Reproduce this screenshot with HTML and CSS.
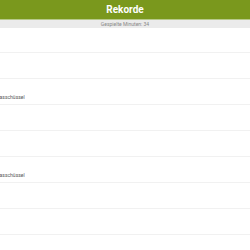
FILE: index.html
```html
<!DOCTYPE html>
<html>
<head>
<meta charset="utf-8">
<link rel="stylesheet" href="styles.css">
</head>
<body>
<header class="bar">Rekorde</header>
<div class="sub">Gespielte Minuten: 34</div>
<ul class="list">
  <li class="row first"></li>
  <li class="row"></li>
  <li class="row"><span class="name">Glasschüssel</span></li>
  <li class="row"></li>
  <li class="row"></li>
  <li class="row"><span class="name">Glasschüssel</span></li>
  <li class="row"></li>
  <li class="row"></li>
  <li class="row"></li>
</ul>
</body>
</html>
```
FILE: styles.css
```css
html, body { margin: 0; padding: 0; background: #fff; font-family: "Roboto", "Liberation Sans", sans-serif; overflow: hidden; }
.bar { background: #7a981d; color: #fff; font-weight: bold; font-size: 10px; height: 19px; line-height: 20px; text-align: center; border-bottom: 1px solid #b7c98a; }
.sub { background: #ebebeb; color: #888; font-size: 5px; height: 8px; line-height: 8px; text-align: center; }
.list { list-style: none; margin: 0; padding: 0; }
.row { height: 25px; border-bottom: 1px solid #f1f1f1; position: relative; }
.row.first { height: 24px; }
.name { position: absolute; left: -5px; bottom: 4px; font-size: 5px; color: #555; }
```
